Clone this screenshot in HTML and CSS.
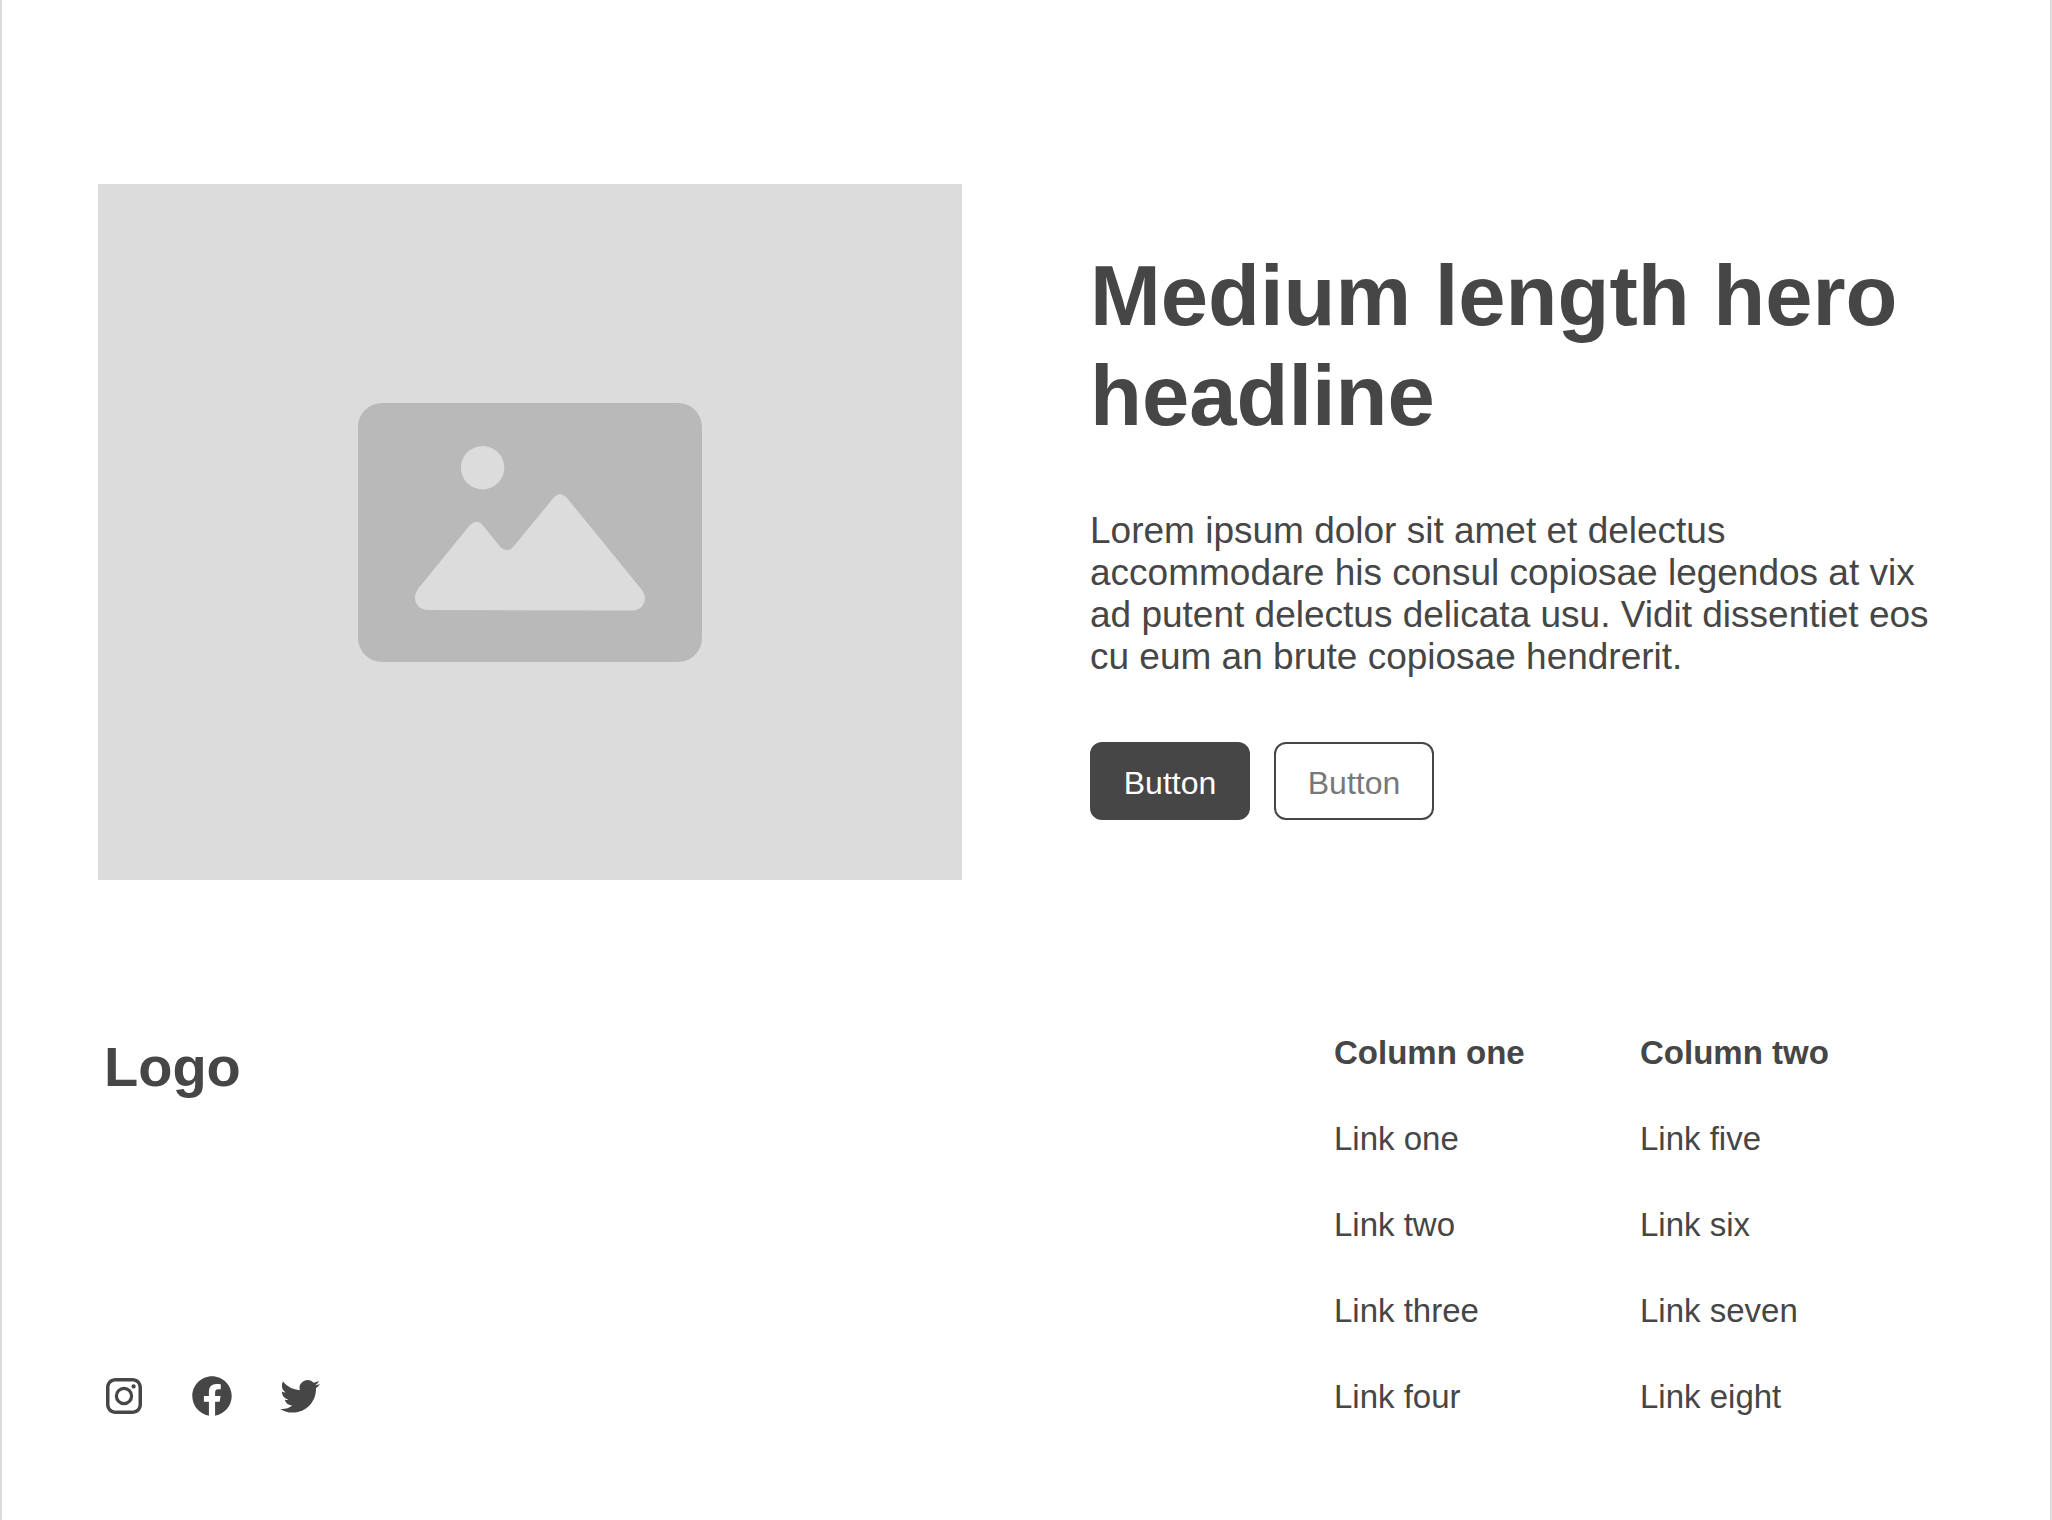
FILE: index.html
```html
<!DOCTYPE html>
<html lang="en">
<head>
<meta charset="utf-8">
<meta name="viewport" content="width=device-width, initial-scale=1">
<title>Medium length hero headline</title>
<link rel="stylesheet" href="styles.css">
</head>
<body>
<div class="page">
  <main class="hero">
    <div class="hero-media">
      <svg class="placeholder" viewBox="0 0 344 259" role="img" aria-label="Image placeholder">
        <rect class="placeholder-frame" width="344" height="259" rx="24"/>
        <circle class="placeholder-shape" cx="124.600" cy="64.700" r="21.700"/>
        <path class="placeholder-shape" d="M111.500 122.500Q115 118.800 118.500 118.800T125 122.500L141.500 143Q145 147 149 147T156 143L195 95.500Q198.500 91.200 202 91.200T209 95L284 187Q287 191 287 195C287 202 281.500 207.500 274.500 207.500L70 207C62.500 207 57 201.500 57 194.500Q57 190 60 186Z"/>
      </svg>
    </div>
    <div class="hero-copy">
      <h1 class="hero-title">Medium length hero headline</h1>
      <p class="hero-text">Lorem ipsum dolor sit amet et delectus accommodare his consul copiosae legendos at vix ad putent delectus delicata usu. Vidit dissentiet eos cu eum an brute copiosae hendrerit.</p>
      <div class="actions">
        <button class="button button-primary" type="button">Button</button>
        <button class="button button-outline" type="button">Button</button>
      </div>
    </div>
  </main>
  <footer class="footer">
    <div class="brand">
      <a class="logo" href="#">Logo</a>
      <div class="social">
        <a class="social-link" href="#" aria-label="Instagram">
          <svg class="icon" viewBox="0 0 24 24"><path fill-rule="evenodd" d="M16 3H8C5 3 3 5 3 8v8c0 3 2 5 5 5h8c3 0 5-2 5-5V8c0-3-2-5-5-5zm3.250 13c0 2.100-1.150 3.250-3.250 3.250H8c-2.100 0-3.250-1.150-3.250-3.250V8c0-2.100 1.150-3.250 3.250-3.250h8c2.100 0 3.250 1.150 3.250 3.250z"/><path fill-rule="evenodd" d="M12 7.400a4.600 4.600 0 1 0 0 9.200 4.600 4.600 0 0 0 0-9.200zm0 7.600a3 3 0 1 1 0-6 3 3 0 0 1 0 6z"/><circle cx="16.800" cy="7.200" r="1.050"/></svg>
        </a>
        <a class="social-link" href="#" aria-label="Facebook">
          <svg class="icon" viewBox="0 0 24 24"><path d="M21.850 12.060C21.850 6.590 17.440 2.150 12 2.150S2.150 6.590 2.150 12.060c0 4.950 3.600 9.050 8.310 9.790v-6.920h-2.500v-2.870h2.500V9.880c0-2.480 1.470-3.860 3.720-3.860 1.080 0 2.200.2 2.200.2v2.430h-1.240c-1.220 0-1.600.77-1.600 1.550v1.860h2.730l-.44 2.870h-2.290v6.920c4.710-.74 8.310-4.840 8.310-9.790z"/></svg>
        </a>
        <a class="social-link" href="#" aria-label="Twitter">
          <svg class="icon" viewBox="0 0 24 24"><path d="M20 8.100v.530c0 5.400-4.100 11.640-11.630 11.640A11.600 11.600 0 0 1 2.080 18.440c.330.040.650.050.980.050a8.200 8.200 0 0 0 5.080-1.750 4.100 4.100 0 0 1-3.820-2.840c.6.110 1.230.090 1.840-.08a4.090 4.090 0 0 1-3.280-4.070c.57.320 1.200.490 1.850.510A4.100 4.100 0 0 1 3.460 4.800a11.630 11.630 0 0 0 8.430 4.280 4.090 4.090 0 0 1 6.970-3.730 8.200 8.200 0 0 0 2.600-.99 4.100 4.100 0 0 1-1.800 2.260c.82-.09 1.610-.3 2.350-.630A8.300 8.300 0 0 1 20 8.100z"/></svg>
        </a>
      </div>
    </div>
    <nav class="link-columns" aria-label="Footer">
      <section class="link-column">
        <h2 class="column-title">Column one</h2>
        <a class="link" href="#">Link one</a>
        <a class="link" href="#">Link two</a>
        <a class="link" href="#">Link three</a>
        <a class="link" href="#">Link four</a>
      </section>
      <section class="link-column">
        <h2 class="column-title">Column two</h2>
        <a class="link" href="#">Link five</a>
        <a class="link" href="#">Link six</a>
        <a class="link" href="#">Link seven</a>
        <a class="link" href="#">Link eight</a>
      </section>
    </nav>
  </footer>
</div>
</body>
</html>
```
FILE: styles.css
```css
* {
  box-sizing: border-box;
}

body {
  margin: 0;
  background: #fff;
  color: #464646;
  font-family: "Liberation Sans", Arial, sans-serif;
}

.page {
  min-height: 100vh;
  border: solid #dcdcdc;
  border-width: 0 2px;
}

.hero {
  display: grid;
  grid-template-columns: 1fr 1fr;
  gap: 128px;
  align-items: center;
  padding: 184px 96px 0;
}

.hero-media {
  display: flex;
  align-items: center;
  justify-content: center;
  aspect-ratio: 864 / 696;
  background: #dcdcdc;
}

.placeholder {
  display: block;
  width: 344px;
}

.placeholder-frame {
  fill: #b9b9b9;
}

.placeholder-shape {
  fill: #dcdcdc;
}

.hero-copy {
  padding-top: 2px;
}

.hero-title {
  margin: 0 0 64px;
  font-size: 85px;
  line-height: 100px;
}

.hero-text {
  margin: 0 0 64px;
  font-size: 37px;
  line-height: 42px;
}

.actions {
  display: flex;
  gap: 24px;
}

.button {
  width: 160px;
  height: 78px;
  padding: 4px 0 0;
  border: 2px solid #464646;
  border-radius: 12px;
  font-family: inherit;
  font-size: 32px;
}

.button-primary {
  background: #464646;
  color: #fff;
}

.button-outline {
  background: #fff;
  color: #787878;
}

.footer {
  display: flex;
  justify-content: space-between;
  padding: 154px 104px 100px 98px;
}

.brand {
  display: flex;
  flex-direction: column;
  justify-content: space-between;
}

.logo {
  padding-left: 4px;
  color: inherit;
  font-size: 56px;
  font-weight: bold;
  line-height: 66px;
  text-decoration: none;
}

.social {
  display: flex;
  gap: 40px;
}

.social-link {
  color: inherit;
}

.icon {
  display: block;
  width: 48px;
  height: 48px;
  fill: currentColor;
}

.link-columns {
  display: grid;
  grid-template-columns: 306px 306px;
  padding-bottom: 4px;
}

.link-column {
  display: flex;
  flex-direction: column;
  align-items: flex-start;
  gap: 48px;
}

.column-title,
.link {
  margin: 0;
  color: inherit;
  font-size: 33px;
  line-height: 38px;
  text-decoration: none;
}
```
